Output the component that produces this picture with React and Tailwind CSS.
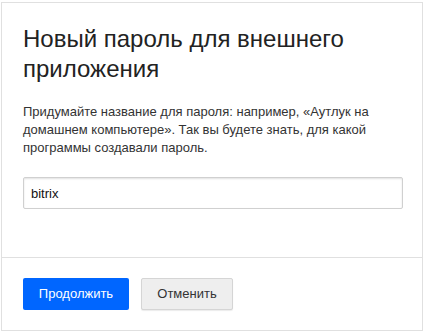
import React, { useState } from 'react';

export default function App() {
  const [name, setName] = useState('bitrix');

  return (
    <div className="w-[425px] h-[334px] bg-white font-['Liberation_Sans',Arial,sans-serif] pt-[2px] pl-[1px]">
      <div className="w-[422px] h-[329px] border border-[#e0e0e0] flex flex-col">
        <div className="px-[21px] pt-[21px] flex-1">
          <h1 className="text-[24px] leading-[30px] text-[#222] font-normal">
            Новый пароль для внешнего приложения
          </h1>
          <p className="mt-[19px] text-[13px] leading-[18px] text-[#333]">
            Придумайте название для пароля: например, «Аутлук на домашнем компьютере». Так вы будете знать, для какой программы создавали пароль.
          </p>
          <input
            type="text"
            value={name}
            onChange={(e) => setName(e.target.value)}
            className="mt-[20px] w-[380px] h-[32px] border border-[#d0d0d0] rounded-[2px] px-[7px] text-[13px] text-[#111] shadow-[inset_0_1px_2px_rgba(0,0,0,0.12)] outline-none"
          />
        </div>
        <div className="border-t border-[#e0e0e0] h-[73px] px-[21px] pt-[20px] flex gap-[12px]">
          <button className="h-[32px] w-[106px] bg-[#0066ff] text-white text-[13px] rounded-[2px]">
            Продолжить
          </button>
          <button className="h-[32px] w-[92px] bg-[#eeeeee] border border-[#d5d5d5] text-[#333] text-[13px] rounded-[2px] shadow-[0_1px_1px_rgba(0,0,0,0.08)]">
            Отменить
          </button>
        </div>
      </div>
    </div>
  );
}
